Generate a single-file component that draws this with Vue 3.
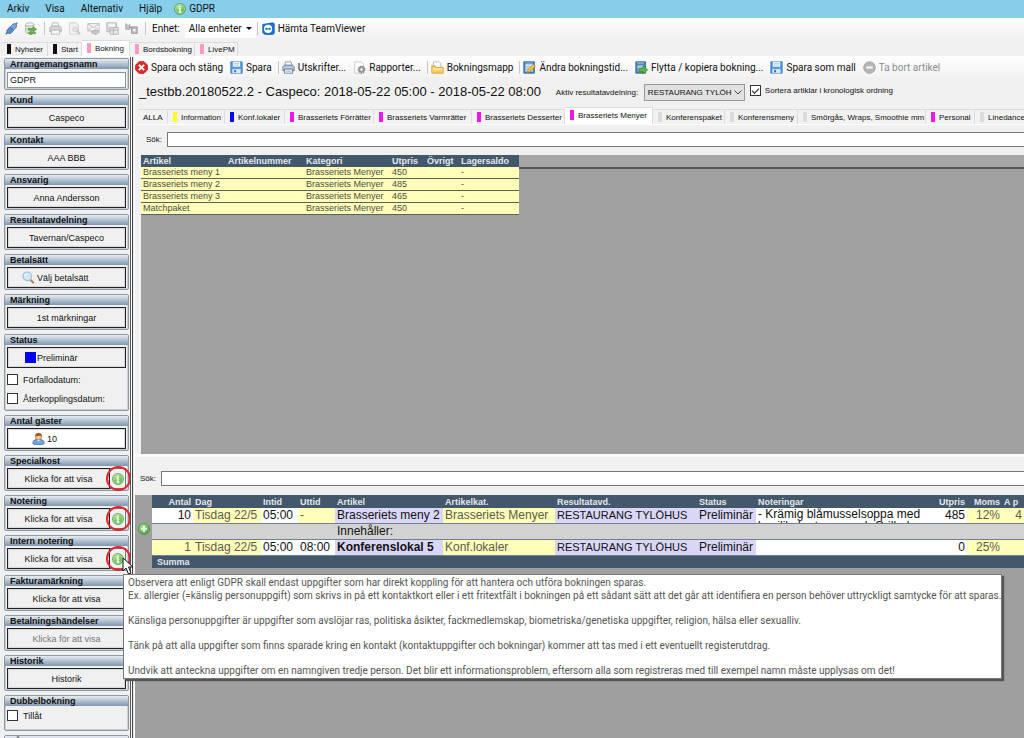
<script setup>
import { ref } from 'vue'

const menus = ['Arkiv', 'Visa', 'Alternativ', 'Hjälp']

const pageTabs = [
  { label: 'Nyheter', tone: 'black' },
  { label: 'Start', tone: 'black' },
  { label: 'Bokning', tone: 'pink', active: true },
  { label: 'Bordsbokning', tone: 'pink' },
  { label: 'LivePM', tone: 'pink' }
]

const actions = [
  { label: 'Spara och stäng', icon: 'close' },
  { label: 'Spara', icon: 'disk', sep: true },
  { label: 'Utskrifter...', icon: 'printer' },
  { label: 'Rapporter...', icon: 'report', sep: true },
  { label: 'Bokningsmapp', icon: 'folder', sep: true },
  { label: 'Ändra bokningstid...', icon: 'edit' },
  { label: 'Flytta / kopiera bokning...', icon: 'move' },
  { label: 'Spara som mall', icon: 'disk' },
  { label: 'Ta bort artikel', icon: 'minus', disabled: true }
]

const articleTabs = [
  { label: 'ALLA' },
  { label: 'Information', tone: 'yellow' },
  { label: 'Konf.lokaler', tone: 'blue' },
  { label: 'Brasseriets Förrätter', tone: 'magenta' },
  { label: 'Brasseriets Varmrätter', tone: 'magenta' },
  { label: 'Brasseriets Desserter', tone: 'magenta' },
  { label: 'Brasseriets Menyer', tone: 'magenta', active: true },
  { label: 'Konferenspaket', tone: 'grey' },
  { label: 'Konferensmeny', tone: 'grey' },
  { label: 'Smörgås, Wraps, Smoothie mm', tone: 'grey' },
  { label: 'Personal', tone: 'magenta' },
  { label: 'Linedance', tone: 'grey' }
]

const articles = [
  ['Brasseriets meny 1', '450'],
  ['Brasseriets meny 2', '485'],
  ['Brasseriets meny 3', '465'],
  ['Matchpaket', '450']
]

const topPanels = [
  { title: 'Kund', text: 'Caspeco' },
  { title: 'Kontakt', text: 'AAA BBB' },
  { title: 'Ansvarig', text: 'Anna Andersson' },
  { title: 'Resultatavdelning', text: 'Tavernan/Caspeco' },
  { title: 'Betalsätt', text: 'Välj betalsätt', icon: 'search' },
  { title: 'Märkning', text: '1st märkningar' }
]

const bottomPanels = [
  { title: 'Antal gäster', text: '10', icon: 'person', white: true },
  { title: 'Specialkost', text: 'Klicka för att visa', info: true },
  { title: 'Notering', text: 'Klicka för att visa', info: true },
  { title: 'Intern notering', text: 'Klicka för att visa', info: true },
  { title: 'Fakturamärkning', text: 'Klicka för att visa' },
  { title: 'Betalningshändelser', text: 'Klicka för att visa', disabled: true },
  { title: 'Historik', text: 'Historik' }
]

const name = ref('GDPR')
const chrono = ref(true)
const due = ref(false)
const followUp = ref(false)
const allow = ref(false)
</script>

<template>
  <div class="app">
    <svg class="defs" aria-hidden="true">
      <defs>
        <radialGradient id="g-green" cx=".4" cy=".3" r=".8">
          <stop offset="0" stop-color="#b5e89a" /><stop offset="1" stop-color="#3f9c35" />
        </radialGradient>
        <symbol id="info" viewBox="0 0 16 16">
          <circle cx="8" cy="8" r="7.3" fill="url(#g-green)" stroke="#4da044" />
          <circle cx="8" cy="8" r="6" fill="none" stroke="#c9efb8" stroke-width=".8" />
          <path d="M8 3.6v1.8M6.3 7H8v5M6.3 12h3.6" fill="none" stroke="#fff" stroke-width="1.7" />
        </symbol>
        <symbol id="plus" viewBox="0 0 16 16">
          <circle cx="8" cy="8" r="7.3" fill="url(#g-green)" stroke="#3c9436" />
          <path d="M8 4v8M4 8h8" stroke="#fff" stroke-width="2.2" />
        </symbol>
        <symbol id="minus" viewBox="0 0 16 16">
          <circle cx="8" cy="8" r="7.2" fill="#b5b5b5" stroke="#a2a2a2" />
          <path d="M4 8h8" stroke="#fff" stroke-width="2.4" />
        </symbol>
        <symbol id="close" viewBox="0 0 16 16">
          <path d="M5 .8h6L15.2 5v6L11 15.2H5L.8 11V5z" fill="#e02a2a" stroke="#b81414" />
          <path d="M4.8 4.8l6.4 6.4M11.2 4.8l-6.4 6.4" stroke="#fff" stroke-width="2.5" />
        </symbol>
        <symbol id="disk" viewBox="0 0 16 16">
          <path d="M1 1h14v14H1z" fill="#5c9bdc" stroke="#3c76b8" />
          <path d="M3.500 1h9v6h-9z" fill="#f4f9ff" /><path d="M4.500 3h7M4.500 5h7" stroke="#9cc5ea" />
          <path d="M3 10h10v5H3z" fill="#dcebf8" /><path d="M5 11h2.500v3H5z" fill="#3c76b8" />
        </symbol>
        <symbol id="printer" viewBox="0 0 16 16">
          <path d="M4 1h7l1.500 5h-9z" fill="#fff" stroke="#71889f" />
          <path d="M1 7l2-2h10l2 2v5H1z" fill="#b9c7d6" stroke="#5b7189" />
          <path d="M3 10h10v5H3z" fill="#f4f8fc" stroke="#5b7189" /><path d="M4.500 12.500h7" stroke="#78a7d8" />
        </symbol>
        <symbol id="report" viewBox="0 0 16 16">
          <path d="M2 1h8l3 3v11H2z" fill="#fbfbfb" stroke="#c5c5c5" />
          <circle cx="10.500" cy="10.500" r="3.800" fill="#ddd" stroke="#858585" stroke-width="2" stroke-dasharray="1.800 .8" />
          <circle cx="10.500" cy="10.500" r="2.900" fill="#b9b9b9" stroke="#858585" /><circle cx="10.500" cy="10.500" r="1.200" fill="#fff" />
        </symbol>
        <symbol id="folder" viewBox="0 0 16 16">
          <path d="M3 1h7l2 2v6H3z" fill="#fff" stroke="#b5b5b5" />
          <path d="M1 6h4l1.500 2H15v7H1z" fill="#f8cf62" stroke="#d49a2a" />
          <path d="M2 10h12" stroke="#fdeaa8" stroke-width="2" />
        </symbol>
        <symbol id="edit" viewBox="0 0 16 16">
          <path d="M1 1h13v14H1z" fill="#4b83bb" stroke="#2d5f94" /><path d="M3 4h9v9H3z" fill="#dcebf8" />
          <path d="M3 2.500h9" stroke="#a9cdee" /><path d="M4 7h5M4 9.500h3" stroke="#7aa5cf" />
          <path d="M5 14l1-3.500L13 4l2.500 2.500L8.500 13z" fill="#f6c443" stroke="#a9731c" stroke-width=".8" />
        </symbol>
        <symbol id="move" viewBox="0 0 16 16">
          <path d="M1 1h12v14H1z" fill="#4b83bb" stroke="#2d5f94" /><path d="M3 5h8v8H3z" fill="#8fb9e0" />
          <path d="M3 2.500h8M3 7.500h8" stroke="#cfe3f5" />
          <path d="M5 9h5V6l5.500 5-5.500 4.700V13H5z" fill="#63b944" stroke="#3b8a26" />
        </symbol>
        <symbol id="search" viewBox="0 0 16 16">
          <path d="M10 10.500l4.500 4.500" stroke="#b98557" stroke-width="2.600" />
          <circle cx="6.500" cy="6.500" r="5.300" fill="#cfe6f8" stroke="#9dbdd8" stroke-width="1.400" />
          <path d="M3.500 6a3 3 0 0 1 3-2.700" fill="none" stroke="#fff" stroke-width="1.300" />
        </symbol>
        <symbol id="person" viewBox="0 0 16 16">
          <path d="M1 14c0-4 3-5 7-5s7 1 7 5l-1.500 1.500h-11z" fill="#6fa5e2" stroke="#3c6fb0" />
          <path d="M6 9l2 3 2-3z" fill="#fff" />
          <circle cx="8" cy="5.500" r="3.900" fill="#f5c795" stroke="#b77a42" />
          <path d="M4 5.500C3.600 0 12.400 0 12 5.500 10.500 3.800 7 4.500 4 5.500z" fill="#9b5a2a" />
        </symbol>
        <symbol id="plug" viewBox="0 0 16 16">
          <path d="M1 15l3.500-3.500M12 4l3-3" stroke="#4a76a8" stroke-width="2" />
          <path d="M2.500 10L6 6l4.500 4.500L7 14c-2.500 1-5.500-1.500-4.500-4z" fill="#5b8fca" stroke="#34639b" />
          <path d="M7 5.500L10 2.500c2.500-1.500 5 1 4 3.700L11 9.500z" fill="#7fabdc" stroke="#34639b" />
        </symbol>
        <symbol id="sync" viewBox="0 0 16 16">
          <path d="M2 3v9c0 3 10 3 10 0V3z" fill="#e3e3e3" stroke="#a5a5a5" />
          <ellipse cx="7" cy="3" rx="5" ry="2" fill="#f8f8f8" stroke="#a5a5a5" />
          <path d="M5 8h6V5.800L15.500 9 11 12v-2H5z" fill="#65b947" stroke="#3b8a26" stroke-width=".7" />
          <path d="M14 12.500H9V11l-4 2.500L9 16v-1.500h5z" fill="#65b947" stroke="#3b8a26" stroke-width=".7" />
        </symbol>
        <symbol id="g-print" viewBox="0 0 16 16">
          <path d="M4 1h7l1.500 5h-9z" fill="#f5f5f5" stroke="#b5b5b5" />
          <path d="M1 7l2-2h10l2 2v5H1z" fill="#d5d5d5" stroke="#aaa" />
          <path d="M3 10h10v5H3z" fill="#f7f7f7" stroke="#b0b0b0" />
        </symbol>
        <symbol id="g-view" viewBox="0 0 16 16">
          <path d="M2 1h8l3 3v11H2z" fill="#f1f1f1" stroke="#ccc" />
          <circle cx="9" cy="9" r="3" fill="#e3e3e3" stroke="#ccc" /><path d="M11 11l4 4" stroke="#c4c4c4" stroke-width="2" />
        </symbol>
        <symbol id="g-mail" viewBox="0 0 16 16">
          <path d="M1 2h14v9H1z" fill="#f3f3f3" stroke="#b8b8b8" /><path d="M1 2l7 5 7-5M1 11l5-5M15 11l-5-5" fill="none" stroke="#b8b8b8" />
          <path d="M6 11h4V9l5 3.500L10 16v-2H6z" fill="#ccc" stroke="#aaa" />
        </symbol>
        <symbol id="g-save" viewBox="0 0 16 16">
          <path d="M1 1h12v11H1z" fill="#d4d4d4" stroke="#b0b0b0" /><path d="M3 2h8v4H3z" fill="#f7f7f7" />
          <path d="M5 7h10v8H5z" fill="#e9e9e9" stroke="#aaa" /><path d="M5 10h10M9 7v8" stroke="#aaa" />
        </symbol>
        <symbol id="g-export" viewBox="0 0 16 16">
          <path d="M1 2l3 2.500 2-1.500v6H1z" fill="#c9c9c9" stroke="#999" />
          <path d="M5 6l4 1" stroke="#999" stroke-width="1.500" /><path d="M8 6h7v8H8z" fill="#bcbcbc" stroke="#8f8f8f" />
          <path d="M10 8.500h3v3h-3z" fill="#f2f2f2" />
        </symbol>
        <symbol id="viewer" viewBox="0 0 16 16">
          <path d="M1 3l12-2 2 1v12l-2 1.500L3 15l-2-2z" fill="#1778d0" stroke="#0c5aa5" />
          <circle cx="7.500" cy="8.500" r="5" fill="#fff" />
          <path d="M3.500 8.500L6 6.500v1.300h3V6.500l2.500 2-2.500 2V9.200H6v1.300z" fill="#1778d0" />
        </symbol>
      </defs>
    </svg>

    <nav class="menubar">
      <button v-for="m in menus" :key="m" class="menu">{{ m }}</button>
      <button class="menu gdpr"><svg class="icon"><use href="#info" /></svg>GDPR</button>
    </nav>

    <div class="toolbar">
      <button class="tool" aria-label="Anslut"><svg class="icon"><use href="#plug" /></svg></button>
      <button class="tool" aria-label="Synkronisera"><svg class="icon"><use href="#sync" /></svg></button>
      <i class="sep"></i>
      <button v-for="g in ['g-print', 'g-view', 'g-mail', 'g-save', 'g-export']" :key="g" class="tool" :aria-label="g" disabled>
        <svg class="icon"><use :href="'#' + g" /></svg>
      </button>
      <i class="sep"></i>
      <span class="unit-label">Enhet:</span>
      <button class="unit">Alla enheter<i class="caret"></i></button>
      <i class="sep"></i>
      <button class="viewer"><svg class="icon"><use href="#viewer" /></svg>Hämta TeamViewer</button>
    </div>

    <div class="page-tabs">
      <button v-for="t in pageTabs" :key="t.label" class="tab" :class="{ active: t.active }">
        <i class="mark" :class="t.tone"></i>{{ t.label }}
      </button>
    </div>

    <div class="body">
      <aside class="side">
        <section class="panel first">
          <h2><label for="event-name">Arrangemangsnamn</label></h2>
          <input id="event-name" v-model="name" class="name" type="text" />
        </section>
        <section v-for="p in topPanels" :key="p.title" class="panel">
          <h2>{{ p.title }}</h2>
          <button class="field" :class="{ left: p.icon }"><svg v-if="p.icon" class="icon"><use :href="'#' + p.icon" /></svg>{{ p.text }}</button>
        </section>
        <section class="panel status">
          <h2>Status</h2>
          <button class="field left status-field"><i class="swatch"></i>Preliminär</button>
          <label class="check"><input v-model="due" type="checkbox" />Förfallodatum:</label>
          <label class="check"><input v-model="followUp" type="checkbox" />Återkopplingsdatum:</label>
        </section>
        <section v-for="p in bottomPanels" :key="p.title" class="panel">
          <h2>{{ p.title }}</h2>
          <div class="split">
            <button class="field" :class="{ white: p.white, person: p.white }" :disabled="p.disabled"><svg v-if="p.icon" class="icon"><use :href="'#' + p.icon" /></svg>{{ p.text }}</button>
            <button v-if="p.info" class="info" aria-label="Information"><svg class="icon"><use href="#info" /></svg></button>
            <i v-if="p.info" class="ring"></i>
          </div>
        </section>
        <section class="panel allow">
          <h2>Dubbelbokning</h2>
          <label class="check"><input v-model="allow" type="checkbox" />Tillåt</label>
        </section>
        <section class="panel"><h2>Låst</h2></section>
      </aside>

      <div class="splitter"></div>

      <main class="main">
        <div class="actions">
          <template v-for="a in actions" :key="a.label">
            <button class="action" :disabled="a.disabled"><svg class="icon"><use :href="'#' + a.icon" /></svg>{{ a.label }}</button>
            <i v-if="a.sep" class="sep"></i>
          </template>
        </div>

        <div class="heading">
          <h1>_testbb.20180522.2 - Caspeco: 2018-05-22 05:00 - 2018-05-22 08:00</h1>
          <label class="dept-label" for="dept">Aktiv resultatavdelning:</label>
          <div class="dept">
            <select id="dept"><option>RESTAURANG TYLÖH</option></select>
            <svg class="chevron" viewBox="0 0 8 5"><path d="M.5.5L4 4 7.500.5" fill="none" stroke="#444" /></svg>
          </div>
          <label class="check sort"><input v-model="chrono" type="checkbox" />Sortera artiklar i kronologisk ordning</label>
        </div>

        <div class="article-tabs">
          <button v-for="t in articleTabs" :key="t.label" class="tab" :class="{ active: t.active }">
            <i v-if="t.tone" class="mark" :class="t.tone"></i>{{ t.label }}
          </button>
        </div>

        <div class="search upper">
          <label for="q1">Sök:</label><input id="q1" type="text" />
        </div>

        <div class="catalog">
          <table class="articles">
            <colgroup><col class="a1" /><col class="a2" /><col class="a3" /><col class="a4" /><col class="a5" /><col class="a6" /></colgroup>
            <thead>
              <tr><th>Artikel</th><th>Artikelnummer</th><th>Kategori</th><th>Utpris</th><th>Övrigt</th><th>Lagersaldo</th></tr>
            </thead>
            <tbody>
              <tr v-for="a in articles" :key="a[0]">
                <td>{{ a[0] }}</td><td></td><td>Brasseriets Menyer</td><td>{{ a[1] }}</td><td></td><td>-</td>
              </tr>
            </tbody>
          </table>
        </div>

        <div class="search lower">
          <label for="q2">Sök:</label><input id="q2" type="text" />
        </div>

        <div class="booking">
          <div class="gutter"><svg class="icon"><use href="#plus" /></svg></div>
          <div class="rows">
            <table class="lines">
              <colgroup>
                <col class="b1" /><col class="b2" /><col class="b3" /><col class="b3" /><col class="b5" /><col class="b6" />
                <col class="b7" /><col class="b8" /><col /><col class="b10" /><col class="b11" /><col class="b12" />
              </colgroup>
              <thead>
                <tr>
                  <th class="r">Antal</th><th>Dag</th><th>Intid</th><th>Uttid</th><th>Artikel</th><th>Artikelkat.</th>
                  <th>Resultatavd.</th><th>Status</th><th>Noteringar</th><th class="r">Utpris</th><th class="r">Moms</th><th>A p</th>
                </tr>
              </thead>
              <tbody>
                <tr>
                  <td class="r">10</td><td class="y">Tisdag 22/5</td><td>05:00</td><td class="y">-</td>
                  <td class="v">Brasseriets meny 2</td><td class="y">Brasseriets Menyer</td>
                  <td class="v caps">RESTAURANG TYLÖHUS</td><td class="v">Preliminär</td>
                  <td><div class="note">- Krämig blåmusselsoppa med<br />basilikakrutonger och Grillad</div></td>
                  <td class="r">485</td><td class="y r">12%</td><td class="y r">4</td>
                </tr>
                <tr class="contents"><td colspan="4"></td><td colspan="8">Innehåller:</td></tr>
                <tr>
                  <td class="y r">1</td><td class="y">Tisdag 22/5</td><td>05:00</td><td>08:00</td>
                  <td class="v"><b>Konferenslokal 5</b></td><td class="y">Konf.lokaler</td>
                  <td class="v caps">RESTAURANG TYLÖHUS</td><td class="v">Preliminär</td><td></td>
                  <td class="r">0</td><td class="y r">25%</td><td class="y"></td>
                </tr>
              </tbody>
              <tfoot><tr><th colspan="12">Summa</th></tr></tfoot>
            </table>
          </div>
        </div>
      </main>
    </div>

    <svg class="cursor" viewBox="0 0 12 18"><path d="M1 1v13l3-3 2.500 6 2.500-1-2.500-6H11z" fill="#fff" stroke="#111" /></svg>
    <div class="tip" role="tooltip">
      <p>Observera att enligt GDPR skall endast uppgifter som har direkt koppling för att hantera och utföra bokningen sparas.<br />Ex. allergier (=känslig personuppgift) som skrivs in på ett kontaktkort eller i ett fritextfält i bokningen på ett sådant sätt att det går att identifiera en person behöver uttryckligt samtycke för att sparas.</p>
      <p>Känsliga personuppgifter är uppgifter som avslöjar ras, politiska åsikter, fackmedlemskap, biometriska/genetiska uppgifter, religion, hälsa eller sexualliv.</p>
      <p>Tänk på att alla uppgifter som finns sparade kring en kontakt (kontaktuppgifter och bokningar) kommer att tas med i ett eventuellt registerutdrag.</p>
      <p>Undvik att anteckna uppgifter om en namngiven tredje person. Det blir ett informationsproblem, eftersom alla som registreras med till exempel namn måste upplysas om det!</p>
    </div>
  </div>
</template>

<style>
body { margin: 0; }
</style>

<style scoped>
.app {
  position: relative;
  display: flex;
  flex-direction: column;
  height: 100vh;
  overflow: hidden;
  background: #f0f0f0;
  color: #111;
  font-family: "Liberation Sans", Arial, sans-serif;
  font-size: 9px;
}
.app * { box-sizing: border-box; }
.defs { position: absolute; width: 0; height: 0; }
button, input, select { font: inherit; color: inherit; margin: 0; }
button { border: 0; padding: 0; background: none; white-space: nowrap; }
.icon { width: 13px; height: 13px; flex: none; display: block; }
.sep { width: 1px; height: 13px; background: #c6c6c6; flex: none; }

.menubar, .toolbar, .actions { font-family: Roboto, "Open Sans", sans-serif; font-size: 10px; }
.menubar { display: flex; align-items: center; flex: none; height: 18px; padding: 0 0 1px 7px; gap: 16px; background: #87ceeb; }
.menu { display: flex; align-items: center; gap: 3px; line-height: 16px; }
.menu .icon { width: 12px; height: 12px; }
.gdpr { margin-left: -4px; }
.toolbar { display: flex; align-items: center; flex: none; height: 22px; padding: 0 0 1px 5px; background: linear-gradient(#fdfdfd, #f0f0f0); }
.tool { width: 19px; display: flex; }
.toolbar .sep { margin-right: 4px; }
.toolbar .tool + .sep { margin-left: 1px; }
.unit-label { margin: 0 5px 0 2px; }
.unit { display: flex; align-items: center; gap: 4px; height: 18px; padding: 0 4px; margin-right: 1px; background: #fff; }
.caret { border: 3px solid transparent; border-top-color: #111; border-bottom: 0; }
.viewer { display: flex; align-items: center; gap: 3px; }

.tab {
  display: flex; align-items: center; gap: 4px; height: 15px; padding: 0 0 0 5px;
  border: 1px solid #dcdcdc; border-bottom: 0; border-left: 0; font-size: 8px; background: #f2f2f2;
}
.tab.active { height: 17px; background: #fff; padding-bottom: 2px; }
.mark { width: 4px; height: 10px; flex: none; }
.black { background: #111; }
.pink { background: #f99ac6; }
.yellow { background: #ffff1e; }
.blue { background: #0a0af0; }
.magenta { background: #f014f0; }
.grey { background: #dcdcdc; }
.page-tabs { display: grid; grid-template-columns: 46px 34px 48px 65px 43px; align-items: end; flex: none; height: 16px; padding-left: 2px; }
.page-tabs .tab { padding-bottom: 2px; }

.body { flex: 1; display: flex; min-height: 0; border-top: 1px solid #fff; }
.side { width: 130px; flex: none; padding: 1px 1px 0 4px; display: flex; flex-direction: column; gap: 4px; overflow: hidden; }
.panel { flex: none; height: 36px; border: 1px solid #8c99a6; border-radius: 2px; box-shadow: inset 0 0 0 1px #c9d0d8; background: #f0f0f0; }
.panel h2 {
  margin: 0; height: 10px; padding-left: 5px; font-size: 9px; line-height: 10px; font-weight: bold; white-space: nowrap;
  background: linear-gradient(#e6ecf2, #8097ae);
}
.first { height: 32px; }
.name { display: block; width: calc(100% - 4px); height: 16px; margin: 3px 2px 0; padding: 0 2px; border: 1px solid #8a929a; background: #fff; }
.field {
  position: relative; display: flex; align-items: center; justify-content: center; width: calc(100% - 4px); height: 21px; margin: 2px 2px 0;
  border: 1px solid #222; box-shadow: inset 0 0 0 1px #d8d8d8; background: #f0f0f0;
}
.field.left { justify-content: flex-start; padding-left: 14px; gap: 2px; }
.field.status-field { padding-left: 17px; gap: 1px; margin-bottom: 2px; }
.field.white { background: #fff; }
.field.person { justify-content: flex-start; padding-left: 24px; gap: 2px; }
.field:disabled { color: #777; }
.swatch { width: 11px; height: 11px; background: #0000f5; }
.status { height: 77px; }
.check { display: flex; align-items: center; gap: 5px; }
.panel .check { height: 19px; padding-left: 2px; }
.check input {
  appearance: none; width: 11px; height: 11px; flex: none; border: 1px solid #333; background: #fff;
}
.check input:checked::after {
  content: ""; display: block; width: 6px; height: 3px; margin: 2px 0 0 1px;
  border: solid #222; border-width: 0 0 1px 1px; transform: rotate(-45deg);
}
.split { position: relative; display: flex; margin: 2px 2px 0; }
.split .field { flex: 1; width: auto; margin: 0; }
.info { width: 16px; display: flex; align-items: center; justify-content: center; border: 1px solid #777; border-left: 0; }
.info .icon { width: 12px; height: 12px; }
.ring { position: absolute; right: -5px; top: -2px; width: 25px; height: 25px; border: 2px solid #e0242c; border-radius: 50%; pointer-events: none; }
.splitter { width: 5px; flex: none; border-left: 1px solid #555; border-right: 1px solid #fff; background: linear-gradient(90deg, #fff 0 1px, #444 1px 2px, #e8e8e8 2px); }

.main { flex: 1; min-width: 0; display: flex; flex-direction: column; overflow: hidden; }
.actions { display: flex; align-items: center; flex: none; gap: 7px; height: 20px; background: linear-gradient(#fdfdfd, #f3f3f3); }
.actions .sep { margin: 0 -4px 0 -1px; }
.action { display: flex; align-items: center; gap: 3px; }
.action:disabled { color: #8c8c8c; }
.heading { display: flex; align-items: center; flex: none; height: 30px; padding-left: 4px; white-space: nowrap; font-size: 8px; }
.heading h1 { margin: 0 15px 0 0; font-size: 13px; line-height: 20px; font-weight: normal; flex: none; }
.dept-label { width: 88px; flex: none; }
.dept { position: relative; width: 101px; flex: none; margin-right: 5px; }
.dept select { appearance: none; display: block; width: 100%; height: 17px; padding: 0 0 0 3px; border: 1px solid #999; border-radius: 0; background: #e1e1e1; }
.chevron { position: absolute; right: 3px; top: 6px; width: 8px; height: 5px; pointer-events: none; }
.sort { gap: 4px; padding-bottom: 3px; }
.article-tabs {
  display: grid; grid-template-columns: 30px 57px 60px 89px 98px 93px 88px 72px 73px 128px 49px 60px;
  align-items: end; flex: none; height: 18px; padding-left: 3px; border-bottom: 1px solid #fff;
}
.search { display: flex; align-items: center; flex: none; gap: 5px; font-size: 8px; }
.search input { flex: 1; height: 15px; border: 1px solid #777; border-right: 0; background: #fff; }
.upper { height: 30px; padding-left: 11px; padding-bottom: 2px; }
.catalog { flex: none; height: 299px; margin-left: 6px; background: linear-gradient(#a6a6a6 0 12px, #555 12px 14px, #a0a0a0 14px); }
table { border-collapse: separate; border-spacing: 0; table-layout: fixed; }
th, td { padding: 0 2px; text-align: left; white-space: nowrap; overflow: hidden; }
th { background: #44586b; color: #e4e8ec; font-weight: bold; }
.articles { width: 378px; color: #4c4c3c; }
.articles th { height: 12px; line-height: 12px; }
.articles td { height: 12px; line-height: 11px; background: #ffffb9; border-bottom: 1px solid #55655a; }
.a1 { width: 85px; } .a2 { width: 78px; } .a3 { width: 86px; } .a4 { width: 35px; } .a5 { width: 34px; } .a6 { width: 60px; }
.lower { height: 41px; padding: 5px 0 0 5px; border-top: 3px solid #fafafa; }
.booking { flex: 1; display: flex; background: #9f9f9f; }
.gutter { width: 17px; flex: none; padding: 28px 0 0 3px; }
.gutter .icon { width: 12px; height: 12px; }
.rows { flex: 1; min-width: 0; overflow: hidden; }
.lines { width: 100%; }
.lines th { height: 12px; line-height: 12px; }
.lines thead th { height: 13px; }
.lines td { height: 16px; line-height: 15px; font-size: 12px; background: #fff; border-bottom: 1px solid #71808c; }
.lines tfoot th { padding-left: 5px; }
.lines td.y { background: #ffffb9; color: #5b5b4c; }
.lines td.v { background: #d9d6f8; }
.lines td.caps { font-size: 11px; }
.lines .contents td { background: #d2d2d2; }
.lines .r { text-align: right; }
.b1 { width: 41px; } .b2 { width: 68px; } .b3 { width: 37px; } .b5 { width: 108px; } .b6 { width: 112px; }
.b7 { width: 142px; } .b8 { width: 59px; } .b10 { width: 40px; } .b11 { width: 35px; } .b12 { width: 22px; }
.note { height: 15px; line-height: 12px; overflow: hidden; }

.cursor { position: absolute; left: 122px; top: 557px; width: 12px; height: 18px; }
.tip {
  position: absolute; left: 123px; top: 574px; padding: 1px 0 0 4px; height: 105px; border: 1px solid #777; background: #fff;
  box-shadow: 2px 2px 1px #555; color: #555; font-family: Roboto, "Open Sans", sans-serif; font-size: 10px; line-height: 13px; white-space: nowrap;
}
.tip p { margin: 0 0 12px; }
</style>
